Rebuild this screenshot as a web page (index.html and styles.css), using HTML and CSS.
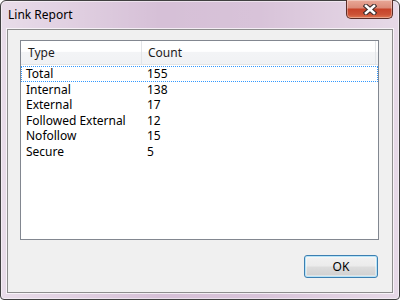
FILE: index.html
```html
<!DOCTYPE html>
<html lang="en">
<head>
  <meta charset="UTF-8">
  <title>Link Report</title>
  <link rel="stylesheet" href="styles.css">
</head>
<body>
  <div class="window">
    <div class="titlebar">
      <span class="title">Link Report</span>
      <button class="close" aria-label="Close">
        <svg width="14" height="11" viewBox="0 0 14 11">
          <path d="M3 2 L11 9 M11 2 L3 9" stroke="#3a2a2a" stroke-width="4.6" stroke-linecap="square"/>
          <path d="M3 2 L11 9 M11 2 L3 9" stroke="#ffffff" stroke-width="2.6" stroke-linecap="square"/>
        </svg>
      </button>
    </div>
    <div class="client">
      <div class="list">
        <div class="header">
          <span class="col-type">Type</span>
          <span class="col-count">Count</span>
          <span class="col-rest"></span>
        </div>
        <div class="row focused"><span class="cell-type">Total</span><span class="cell-count">155</span></div>
        <div class="row"><span class="cell-type">Internal</span><span class="cell-count">138</span></div>
        <div class="row"><span class="cell-type">External</span><span class="cell-count">17</span></div>
        <div class="row"><span class="cell-type">Followed External</span><span class="cell-count">12</span></div>
        <div class="row"><span class="cell-type">Nofollow</span><span class="cell-count">15</span></div>
        <div class="row"><span class="cell-type">Secure</span><span class="cell-count">5</span></div>
      </div>
      <div class="buttons">
        <button class="ok">OK</button>
      </div>
    </div>
  </div>
</body>
</html>
```

FILE: styles.css
```css
body {
  margin: 0;
  background: #ffffff;
  font-family: "Noto Sans", "Liberation Sans", sans-serif;
  font-size: 12px;
}
.window {
  width: 400px;
  height: 300px;
  box-sizing: border-box;
  border: 1px solid #404040;
  border-radius: 6px 6px 4px 4px;
  background:
    linear-gradient(90deg, rgba(255,255,255,0.45), rgba(255,255,255,0) 40%, rgba(255,255,255,0.05) 65%, rgba(255,255,255,0.4)),
    #d6c0d7;
  box-shadow: inset 0 0 0 1px rgba(255,255,255,0.5);
  padding: 0 6px 6px 6px;
  display: flex;
  flex-direction: column;
}
.titlebar {
  height: 28px;
  display: flex;
  align-items: flex-start;
}
.title {
  color: #000000;
  margin-top: 6px;
  margin-left: 1px;
  line-height: 16px;
}
.close {
  margin-left: auto;
  width: 47px;
  height: 19px;
  margin-top: -1px;
  padding: 0;
  border: 1px solid #5b2d27;
  border-top: none;
  border-radius: 0 0 5px 5px;
  background: linear-gradient(#e9a898 0%, #dc8c7a 42%, #c7432a 52%, #cc5236 80%, #df7752 100%);
  box-shadow: inset 0 0 0 1px rgba(255,255,255,0.35);
  display: flex;
  align-items: center;
  justify-content: center;
}
.close svg {
  display: block;
  margin-top: 1px;
}
.client {
  flex: 1;
  background: #f0f0f0;
  border: 1px solid #8d8d8d;
  box-shadow: 0 0 0 1px rgba(255,255,255,0.7);
  padding: 10px 13px 13px 12px;
  display: flex;
  flex-direction: column;
}
.list {
  height: 200px;
  box-sizing: border-box;
  border: 1px solid #828790;
  background: #ffffff;
}
.header {
  display: flex;
  height: 23px;
  border-bottom: 1px solid #e5e5e5;
  background: linear-gradient(#ffffff 0%, #ffffff 45%, #f3f4f6 50%, #f1f2f4 100%);
  color: #1c1c1c;
}
.header span {
  line-height: 23px;
  box-sizing: border-box;
}
.col-type {
  width: 121px;
  padding-left: 7px;
  border-right: 1px solid #e3e5e8;
}
.col-count {
  width: 234px;
  padding-left: 6px;
  border-right: 1px solid #e3e5e8;
}
.col-rest {
  flex: 1;
}
.row {
  display: flex;
  height: 15.6px;
  line-height: 15.6px;
  color: #000000;
}
.row.focused {
  margin-top: 1px;
  outline: 1px dotted #3399ff;
  outline-offset: -1px;
}
.cell-type {
  width: 121px;
  padding-left: 5px;
  box-sizing: border-box;
}
.cell-count {
  padding-left: 5px;
}
.buttons {
  display: flex;
  justify-content: flex-end;
  margin-top: 15px;
  padding-right: 1px;
}
.ok {
  width: 74px;
  height: 23px;
  font-family: inherit;
  font-size: 12px;
  color: #000000;
  border: 1px solid #3c7fb1;
  border-radius: 3px;
  background: linear-gradient(#f2f2f2 0%, #ebebeb 48%, #dddddd 52%, #cfcfcf 100%);
  box-shadow: inset 0 0 0 1px #b7e4f8, inset 0 0 0 2px rgba(255,255,255,0.4);
  padding: 0;
}
```
